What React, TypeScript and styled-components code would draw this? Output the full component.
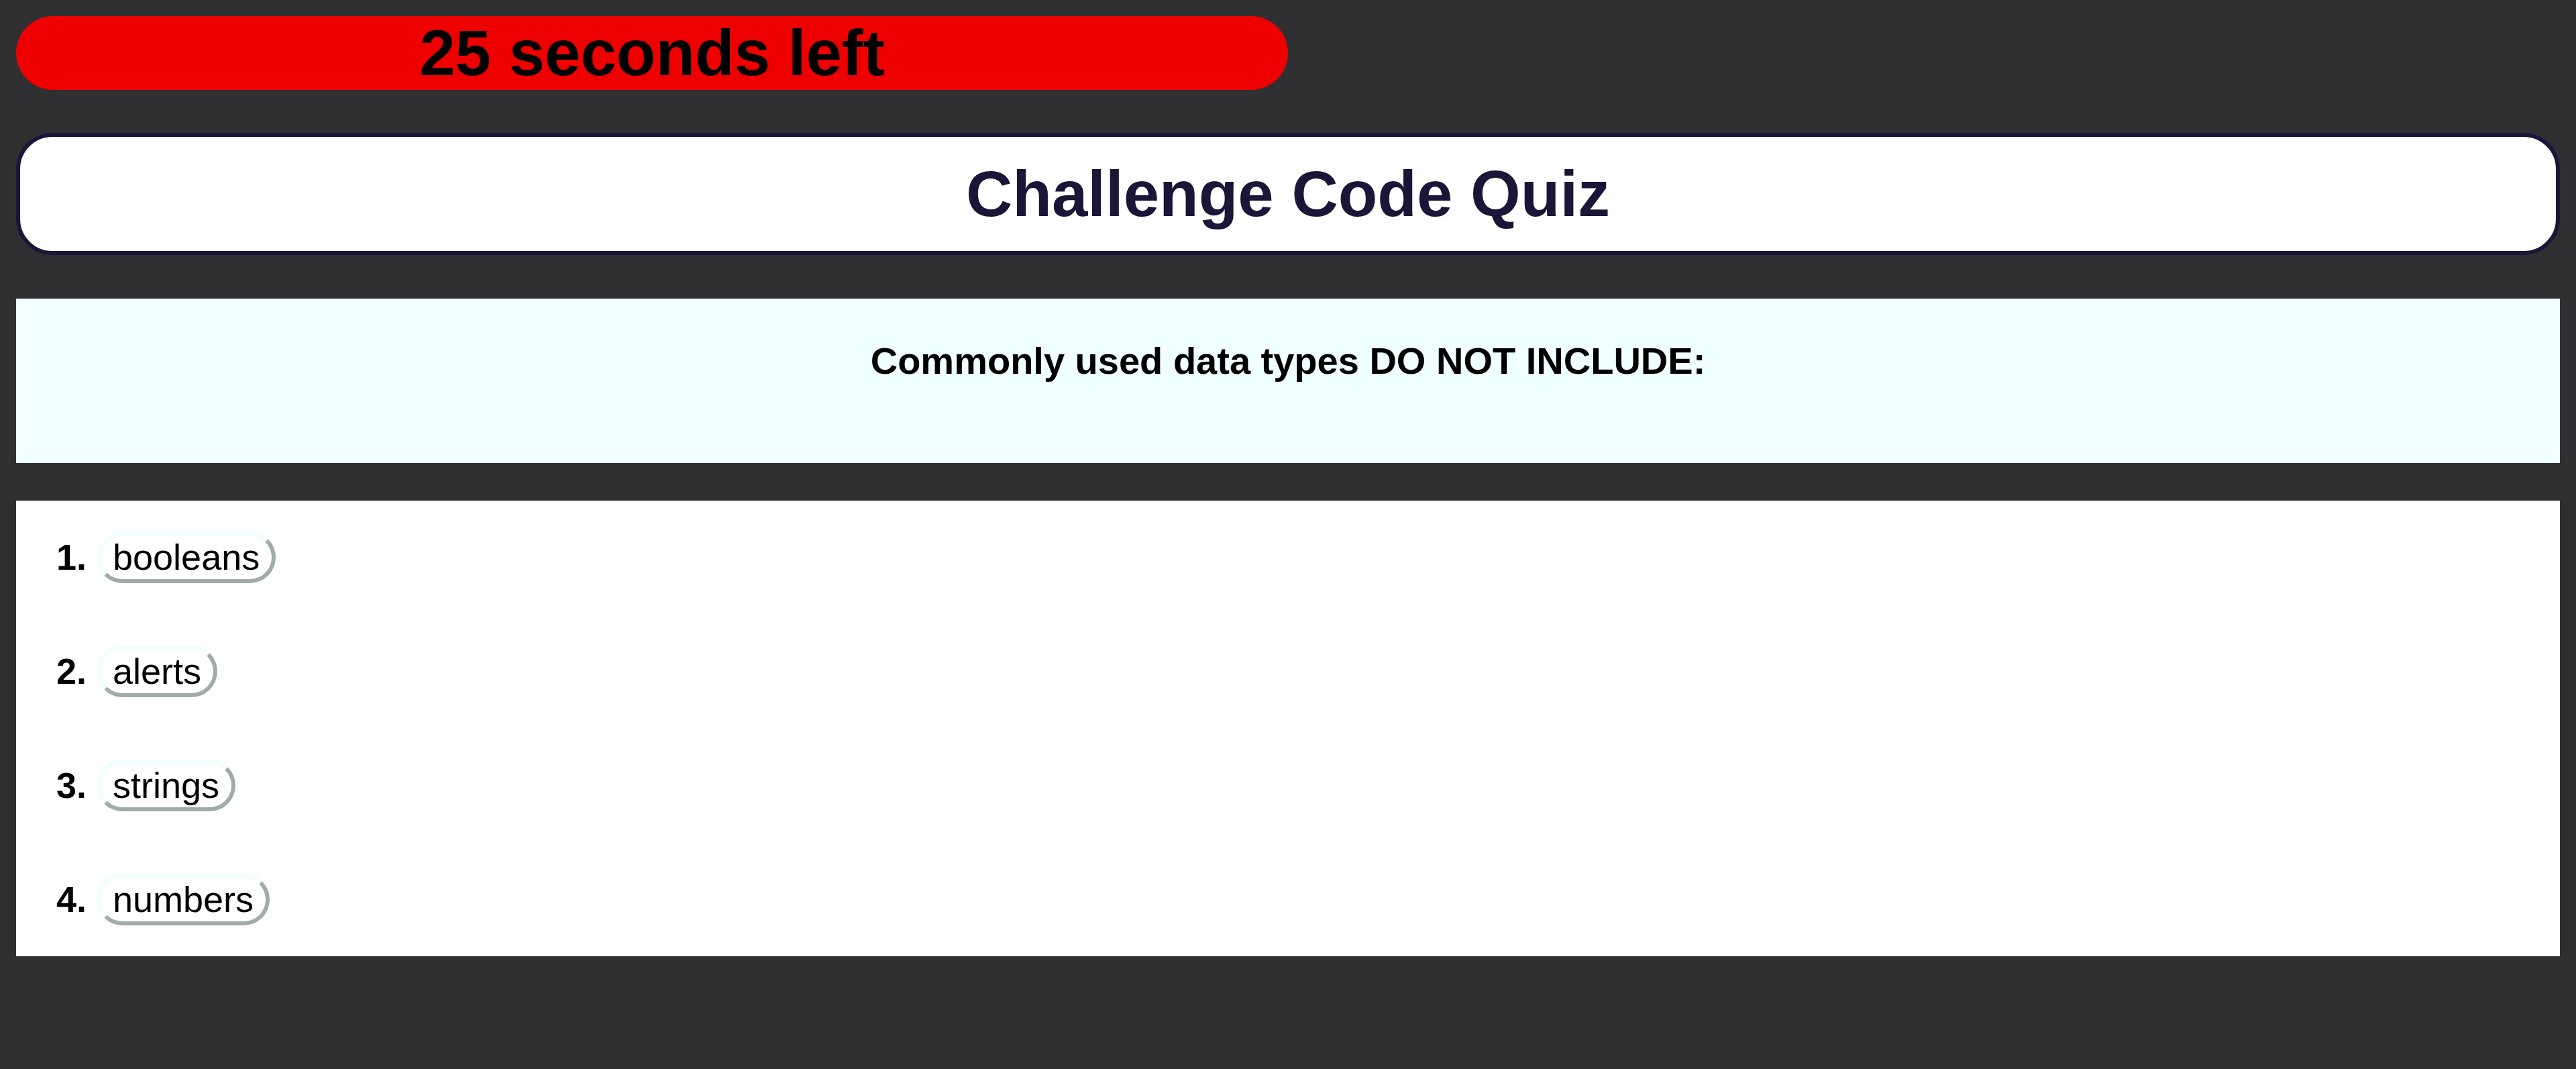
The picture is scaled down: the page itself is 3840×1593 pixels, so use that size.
import React from "react";
import styled, { createGlobalStyle } from "styled-components";

const GlobalStyle = createGlobalStyle`
  html, body {
    background: #2f2f31;
  }
  body {
    margin: 24px;
    font-family: "Liberation Sans", Arial, sans-serif;
    color: #000;
  }
`;

const Timer = styled.h1`
  width: 50%;
  margin: 0;
  background: #ef0000;
  border-radius: 60px;
  text-align: center;
  font-size: 96px;
  font-weight: 700;
  line-height: normal;
  color: #000;
`;

const Header = styled.header`
  margin-top: 64px;
  border: 6px solid #1b1537;
  border-radius: 54px;
  background: #fff;
  padding: 30px;
  text-align: center;
`;

const Title = styled.h1`
  margin: 0;
  font-size: 96px;
  font-weight: 700;
  line-height: normal;
  color: #1b1537;
`;

const QuestionBox = styled.section`
  box-sizing: border-box;
  margin-top: 65px;
  height: 245px;
  padding-top: 60px;
  background: #f0ffff;
  text-align: center;
`;

const QuestionText = styled.p`
  margin: 0;
  font-size: 56px;
  font-weight: 700;
  line-height: normal;
`;

const AnswerBox = styled.section`
  margin-top: 56px;
  background: #fff;
  padding: 46px 0;
`;

const AnswerList = styled.ol`
  margin: 0;
  padding: 0 0 0 120px;
`;

const AnswerItem = styled.li`
  font-size: 54px;
  font-weight: 700;
  line-height: 1;
  & + & {
    margin-top: 93px;
  }
  &::marker {
    font-weight: 700;
  }
`;

const AnswerButton = styled.button`
  font-family: "Liberation Sans", Arial, sans-serif;
  font-size: 54px;
  font-weight: 400;
  line-height: 65px;
  color: #000;
  background: #fff;
  border: 6px outset #f0ffff;
  border-radius: 45px;
  padding: 0 18px;
  margin: 0;
  vertical-align: baseline;
  cursor: pointer;
`;

const answers = ["booleans", "alerts", "strings", "numbers"];

export default function App() {
  return (
    <>
      <GlobalStyle />
      <Timer>25 seconds left</Timer>
      <Header>
        <Title>Challenge Code Quiz</Title>
      </Header>
      <QuestionBox>
        <QuestionText>Commonly used data types DO NOT INCLUDE:</QuestionText>
      </QuestionBox>
      <AnswerBox>
        <AnswerList>
          {answers.map((a) => (
            <AnswerItem key={a}>
              <AnswerButton>{a}</AnswerButton>
            </AnswerItem>
          ))}
        </AnswerList>
      </AnswerBox>
    </>
  );
}
